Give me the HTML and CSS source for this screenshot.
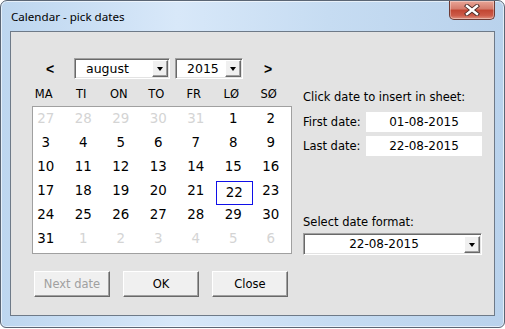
FILE: index.html
```html
<!DOCTYPE html>
<html lang="da">
<head>
    <meta charset="UTF-8">
    <title>Calendar - pick dates</title>
    <link rel="stylesheet" href="styles.css">
</head>
<body>
    <div class="window">
        <div class="titlebar">
            <span class="title">Calendar - pick dates</span>
            <button class="close-btn" title="Close">
                <svg width="16" height="12" viewBox="0 0 16 12">
                    <path d="M3 2 L13 10 M13 2 L3 10" stroke="#4a2a26" stroke-width="4.2" stroke-linecap="square"/>
                    <path d="M3 2 L13 10 M13 2 L3 10" stroke="#ffffff" stroke-width="2.4" stroke-linecap="square"/>
                </svg>
            </button>
        </div>
        <div class="client">
            <div class="cal-col">
                <div class="nav">
                    <span class="arrow prev">&lt;</span>
                    <div class="combo month-combo">
                        <span class="combo-text">august</span>
                        <span class="drop"></span>
                    </div>
                    <div class="combo year-combo">
                        <span class="combo-text">2015</span>
                        <span class="drop"></span>
                    </div>
                    <span class="arrow next">&gt;</span>
                </div>
                <div class="weekdays">
                    <span>MA</span><span>TI</span><span>ON</span><span>TO</span><span>FR</span><span>LØ</span><span>SØ</span>
                </div>
                <div class="days">
                    <span class="other">27</span><span class="other">28</span><span class="other">29</span><span class="other">30</span><span class="other">31</span><span>1</span><span>2</span>
                    <span>3</span><span>4</span><span>5</span><span>6</span><span>7</span><span>8</span><span>9</span>
                    <span>10</span><span>11</span><span>12</span><span>13</span><span>14</span><span>15</span><span>16</span>
                    <span>17</span><span>18</span><span>19</span><span>20</span><span>21</span><span class="selected">22</span><span>23</span>
                    <span>24</span><span>25</span><span>26</span><span>27</span><span>28</span><span>29</span><span>30</span>
                    <span>31</span><span class="other">1</span><span class="other">2</span><span class="other">3</span><span class="other">4</span><span class="other">5</span><span class="other">6</span>
                </div>
                <div class="buttons">
                    <button class="btn" disabled>Next date</button>
                    <button class="btn">OK</button>
                    <button class="btn">Close</button>
                </div>
            </div>
            <div class="side">
                <p class="hint">Click date to insert in sheet:</p>
                <div class="field-row">
                    <span class="field-label">First date:</span>
                    <span class="field-box">01-08-2015</span>
                </div>
                <div class="field-row">
                    <span class="field-label">Last date:</span>
                    <span class="field-box">22-08-2015</span>
                </div>
                <p class="format-label">Select date format:</p>
                <div class="combo format-combo">
                    <span class="combo-text">22-08-2015</span>
                    <span class="drop"></span>
                </div>
            </div>
        </div>
    </div>
</body>
</html>
```
FILE: styles.css
```css
body {
    margin: 0;
    background-color: #ffffff;
    font-family: "DejaVu Sans", Tahoma, sans-serif;
}
.window {
    width: 505px;
    height: 328px;
    box-sizing: border-box;
    border: 1px solid #5b6675;
    border-radius: 7px 7px 6px 6px;
    background: linear-gradient(to right, #bdd6ef, #d8e8f9 35%, #c6dcf2 65%, #b9d2ec);
    box-shadow: inset 0 0 0 1px rgba(255, 255, 255, 0.6);
    display: flex;
    flex-direction: column;
}
.titlebar {
    height: 30px;
    display: flex;
    justify-content: space-between;
    align-items: flex-start;
}
.title {
    font-family: "Noto Sans", sans-serif;
    font-size: 11.6px;
    color: #000;
    padding-left: 10px;
    line-height: 14px;
    margin-top: 9px;
}
.close-btn {
    width: 46px;
    height: 19px;
    margin-right: 9px;
    padding: 0;
    border: 1px solid #6d3b35;
    border-top: none;
    border-radius: 0 0 5px 5px;
    background: linear-gradient(to bottom, #e8a597, #d47a6a 45%, #c14532 50%, #cc5a48 80%, #e0917f);
    box-shadow: inset 0 0 0 1px rgba(255, 255, 255, 0.35);
    display: flex;
    align-items: center;
    justify-content: center;
}
.client {
    margin-left: 9px;
    width: 485px;
    height: 285px;
    box-sizing: border-box;
    border: 1px solid #6e7a88;
    background-color: #e3e3e3;
    display: flex;
    font-size: 11.5px;
    color: #000;
}
.cal-col {
    padding-left: 21px;
    width: 261px;
}
.nav {
    display: flex;
    align-items: center;
    margin-top: 26px;
    height: 21px;
}
.arrow {
    font-family: "Liberation Sans", sans-serif;
    font-weight: bold;
    font-size: 14px;
}
.prev {
    padding-left: 14px;
    width: 28px;
}
.next {
    margin-left: 21px;
}
.combo {
    box-sizing: border-box;
    height: 21px;
    background-color: #fff;
    border: 1px solid;
    border-color: #a0a0a0 #ffffff #ffffff #a0a0a0;
    box-shadow: inset 1px 1px 0 #696969, inset -1px -1px 0 #e3e3e3;
    display: flex;
    align-items: center;
    justify-content: space-between;
    font-size: 12.5px;
}
.combo-text {
    padding-left: 11px;
}
.month-combo {
    width: 96px;
}
.year-combo {
    width: 68px;
    margin-left: 5px;
}
.drop {
    width: 16px;
    height: 17px;
    margin-right: 1px;
    box-sizing: border-box;
    background-color: #f0f0f0;
    border: 1px solid;
    border-color: #ffffff #696969 #696969 #ffffff;
    box-shadow: inset -1px -1px 0 #a0a0a0;
    position: relative;
}
.drop::after {
    content: "";
    position: absolute;
    left: 3.5px;
    top: 6px;
    border-left: 3.5px solid transparent;
    border-right: 3.5px solid transparent;
    border-top: 4px solid #000;
}
.weekdays {
    display: grid;
    grid-template-columns: repeat(7, 37.5px);
    margin-top: 6px;
    height: 18px;
    line-height: 18px;
}
.weekdays span {
    text-align: center;
    padding-right: 14px;
}
.days {
    margin-top: 3px;
    width: 260px;
    height: 148px;
    box-sizing: border-box;
    border: 1px solid #a0a0a0;
    background-color: #fff;
    display: grid;
    grid-template-columns: repeat(7, 37.5px);
    grid-auto-rows: 24px;
    align-content: start;
}
.days span {
    font-size: 13.4px;
    line-height: 24px;
    text-align: center;
    padding-right: 11px;
    margin-left: -1px;
}
.days .other {
    color: #d4d4d4;
}
.days .selected {
    outline: 1px solid #1010e8;
    outline-offset: -1px;
    padding-right: 0;
    margin-left: -5px;
    margin-right: 5px;
    margin-top: 2px;
    margin-bottom: -2px;
}
.buttons {
    display: flex;
    gap: 13px;
    margin-top: 17px;
    padding-left: 2px;
}
.btn {
    width: 76px;
    height: 26px;
    font-family: "DejaVu Sans", Tahoma, sans-serif;
    font-size: 11.5px;
    color: #000;
    background-color: #f0f0f0;
    border: 1px solid;
    border-color: #ffffff #696969 #696969 #ffffff;
    box-shadow: inset -1px -1px 0 #a0a0a0;
    padding: 0;
}
.btn:disabled {
    color: #a0a0a0;
}
.side {
    margin-left: 10px;
    width: 179px;
}
.hint {
    margin: 57px 0 0 0;
    line-height: 16px;
}
.field-row {
    display: flex;
    align-items: center;
    height: 20px;
    margin-top: 7px;
}
.field-row + .field-row {
    margin-top: 4px;
}
.field-label {
    width: 63px;
}
.field-box {
    width: 116px;
    height: 20px;
    line-height: 20px;
    background-color: #fff;
    text-align: center;
    font-size: 12px;
}
.format-label {
    margin: 58px 0 0 0;
    line-height: 16px;
}
.format-combo {
    margin-top: 3px;
    width: 179px;
    height: 22px;
    font-size: 12px;
}
.format-combo .combo-text {
    flex: 1;
    text-align: center;
    padding-left: 0;
}
```
